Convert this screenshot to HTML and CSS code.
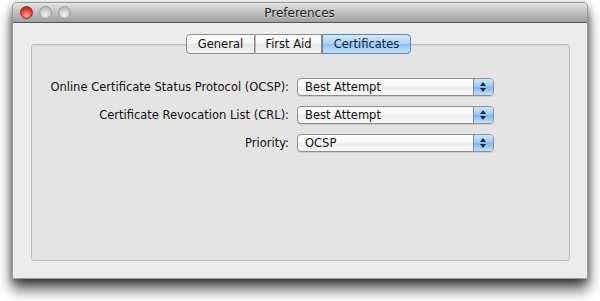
FILE: index.html
```html
<!DOCTYPE html>
<html lang="en">
	<head>
		<meta charset="UTF-8" />
		<title>Preferences</title>
		<link rel="stylesheet" href="styles.css">
	</head>
	<body>
		<div class="window">
			<div class="titlebar">
				<div class="lights">
					<span class="light close"></span>
					<span class="light"></span>
					<span class="light"></span>
				</div>
				<div class="title">Preferences</div>
			</div>
			<div class="content">
				<div class="tabbox">
					<div class="tabs">
						<span class="tab">General</span>
						<span class="tab">First Aid</span>
						<span class="tab active">Certificates</span>
					</div>
					<div class="form">
						<label>Online Certificate Status Protocol (OCSP):</label>
						<div class="popup"><span>Best Attempt</span><i class="arrows"></i></div>
						<label>Certificate Revocation List (CRL):</label>
						<div class="popup"><span>Best Attempt</span><i class="arrows"></i></div>
						<label>Priority:</label>
						<div class="popup"><span>OCSP</span><i class="arrows"></i></div>
					</div>
				</div>
			</div>
		</div>
	</body>
</html>
```
FILE: styles.css
```css
* {
	font-family: "DejaVu Sans", sans-serif;
	box-sizing: border-box;
}
body {
	margin: 0;
	min-height: 301px;
	padding-top: 2px;
	background: #fff;
}
.window {
	margin-left: 12px;
	width: 576px;
	height: 277px;
	background: #ececec;
	border: 1px solid #9a9a9a;
	border-radius: 5px 5px 0 0;
	box-shadow: 0 10px 14px rgba(0, 0, 0, 0.7), 0 2px 6px rgba(0, 0, 0, 0.35);
	display: flex;
	flex-direction: column;
}
.titlebar {
	height: 20px;
	background: linear-gradient(#e4e4e4, #c0c0c0 50%, #a0a0a0);
	border-bottom: 1px solid #555;
	border-radius: 4px 4px 0 0;
	display: flex;
	align-items: center;
}
.lights {
	display: flex;
	gap: 6px;
	margin-left: 7px;
	width: 72px;
}
.light {
	width: 13px;
	height: 13px;
	border-radius: 50%;
	background: radial-gradient(circle at 50% 70%, #f2f2f2, #c6c6c6 60%, #a8a8a8);
	border: 1px solid #9b9b9b;
}
.light.close {
	background: radial-gradient(circle at 50% 75%, #ffb0a8, #e83a30 55%, #a01810);
	border-color: #8c2a22;
}
.title {
	flex: 1;
	text-align: center;
	font-size: 12px;
	color: #1c1c1c;
	margin-right: 80px;
	text-shadow: 0 1px 0 rgba(255, 255, 255, 0.5);
}
.content {
	flex: 1;
	padding: 21px 17px 17px 18px;
	display: flex;
}
.tabbox {
	flex: 1;
	background: #e4e4e4;
	border: 1px solid #bdbdbd;
	border-radius: 3px;
	box-shadow: inset 0 1px 1px rgba(0, 0, 0, 0.08);
}
.tabs {
	display: flex;
	justify-content: center;
	margin: -11px 0 0 -4px;
}
.tab {
	height: 20px;
	line-height: 18px;
	font-size: 11.5px;
	color: #111;
	white-space: nowrap;
	background: linear-gradient(#ffffff, #f1f1f1 50%, #e6e6e6 51%, #f4f4f4);
	border: 1px solid #8c8c8c;
	border-left: 1px solid #b8b8b8;
	text-align: center;
}
.tab:first-child {
	border-left: 1px solid #8c8c8c;
	border-radius: 4px 0 0 4px;
	width: 69px;
}
.tab:nth-child(2) {
	width: 67px;
}
.tab:last-child {
	border-radius: 0 4px 4px 0;
	width: 89px;
}
.tab.active {
	background: linear-gradient(#d6e9fb, #a9d0f5 50%, #8ec1f0 51%, #c7e3fb);
	border-color: #5f84ad;
	color: #0c2340;
}
.form {
	display: grid;
	grid-template-columns: 239px 197px;
	column-gap: 8px;
	row-gap: 10px;
	margin: 24px 0 0 18px;
	align-items: center;
}
.form label {
	text-align: right;
	font-size: 11.5px;
	color: #111;
	white-space: nowrap;
}
.popup {
	height: 18px;
	border: 1px solid #8e8e8e;
	border-radius: 4px;
	background: linear-gradient(#ffffff, #f6f6f6 50%, #ececec 51%, #fafafa);
	display: flex;
	align-items: center;
	font-size: 11.5px;
	color: #111;
	box-shadow: 0 1px 1px rgba(0, 0, 0, 0.1);
	overflow: hidden;
}
.popup span {
	flex: 1;
	padding-left: 7px;
}
.arrows {
	width: 20px;
	height: 100%;
	background: linear-gradient(#cfe6fb, #97c6f2 50%, #7ab5ec 51%, #c3e1fb);
	border-left: 1px solid #6d8fb4;
	position: relative;
}
.arrows::before,
.arrows::after {
	content: "";
	position: absolute;
	left: 6px;
	border-left: 3px solid transparent;
	border-right: 3px solid transparent;
}
.arrows::before {
	top: 3px;
	border-bottom: 4px solid #1b2b40;
}
.arrows::after {
	bottom: 3px;
	border-top: 4px solid #1b2b40;
}
```
